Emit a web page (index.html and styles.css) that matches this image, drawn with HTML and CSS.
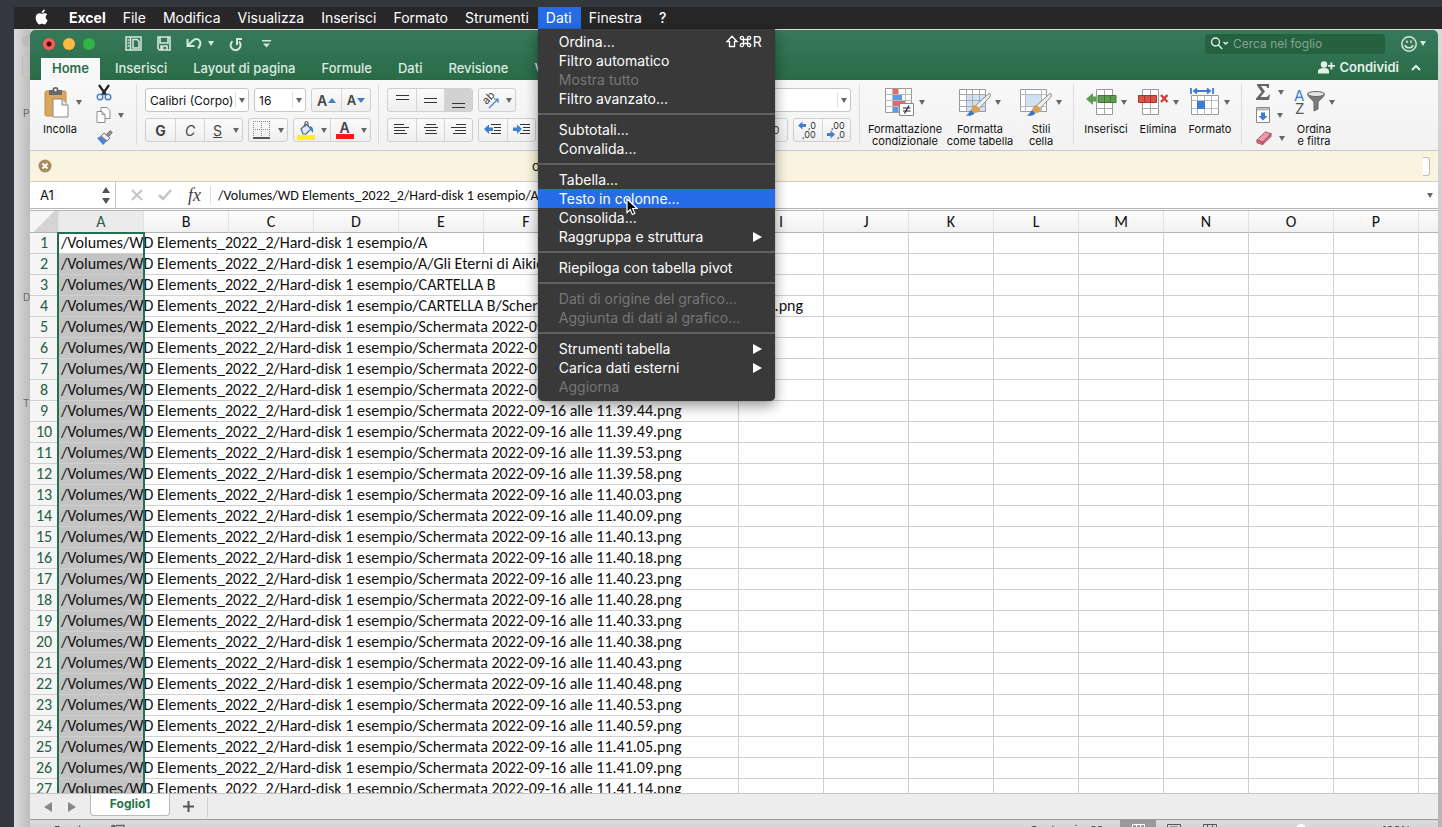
FILE: index.html
```html
<!DOCTYPE html>
<html lang="it">
<head>
    <meta charset="UTF-8">
    <meta name="viewport" content="width=device-width, initial-scale=1.0">
    <title>Excel - Foglio1</title>
    <link rel="stylesheet" href="styles.css">
</head>
<body>

    <!-- Barra dei menu -->
    <nav class="menubar">
        <svg class="apple" width="14" height="17" viewBox="0 0 14 17" fill="#fff"><path d="M9.8 0.5c.1 1-.3 1.9-.9 2.600-.6.7-1.400 1.100-2.200 1-.1-.9.3-1.800.9-2.400C8.200 1 9.100.5 9.800.5zM12.300 5.500c-1 .6-1.600 1.500-1.600 2.700 0 1.400.8 2.400 2 2.900-.3.900-.7 1.700-1.200 2.400-.6.9-1.300 1.900-2.300 1.900-.9 0-1.200-.6-2.300-.6s-1.400.6-2.300.6c-1 0-1.800-1-2.400-1.900C.5 11.200.1 8 1.400 6.100c.7-1.100 1.800-1.800 3-1.800 1 0 1.800.6 2.500.6s1.700-.7 2.900-.7c1 0 1.900.5 2.500 1.300z"/></svg>
        <button class="menu-title app-name">Excel</button>
        <button class="menu-title">File</button>
        <button class="menu-title">Modifica</button>
        <button class="menu-title">Visualizza</button>
        <button class="menu-title">Inserisci</button>
        <button class="menu-title">Formato</button>
        <button class="menu-title">Strumenti</button>
        <div class="menu-open">
            <button class="menu-title active">Dati</button>
            <div class="dropdown">
                <button>Ordina... <span class="shortcut"><svg width="12" height="13" viewBox="0 0 12 13" fill="none" stroke="#fff" stroke-width="1.300"><path d="M6 1.200L11 6.500H8.500V11.500H3.500V6.500H1z"/></svg><svg width="13" height="13" viewBox="0 0 13 13" fill="none" stroke="#fff" stroke-width="1.300"><path d="M4.500 4.500h4v4h-4zM4.500 4.500H3A1.600 1.600 0 1 1 4.500 3zM8.500 4.500V3A1.600 1.600 0 1 1 10 4.500zM8.500 8.500H10A1.600 1.600 0 1 1 8.500 10zM4.500 8.500V10A1.600 1.600 0 1 1 3 8.500z"/></svg>R</span></button>
                <button>Filtro automatico</button>
                <button disabled>Mostra tutto</button>
                <button>Filtro avanzato...</button>
                <hr>
                <button>Subtotali...</button>
                <button>Convalida...</button>
                <hr>
                <button>Tabella...</button>
                <button class="highlight">Testo in colonne...
                    <svg class="cursor" width="13" height="18" viewBox="0 0 13 18"><path d="M1 1v13.500l3.200-3 2.200 5 2.400-1-2.200-5H11z" fill="#000" stroke="#fff" stroke-width="1.200"/></svg>
                </button>
                <button>Consolida...</button>
                <button class="submenu">Raggruppa e struttura</button>
                <hr>
                <button>Riepiloga con tabella pivot</button>
                <hr>
                <button disabled>Dati di origine del grafico...</button>
                <button disabled>Aggiunta di dati al grafico...</button>
                <hr>
                <button class="submenu">Strumenti tabella</button>
                <button class="submenu">Carica dati esterni</button>
                <button disabled>Aggiorna</button>
            </div>
        </div>
        <button class="menu-title">Finestra</button>
        <button class="menu-title help">?</button>
    </nav>

    <div class="desktop">
        <!-- Finestra in secondo piano -->
        <aside class="back-window">
            <i class="back-dot"></i>
            <i class="back-button"></i>
            <span>P</span>
            <span>D</span>
            <span>T</span>
        </aside>

        <main class="window">
            <header class="titlebar">
                <div class="quick">
                    <span class="light red"></span>
                    <span class="light yellow"></span>
                    <span class="light green"></span>
                    <button class="quick-first" aria-label="Modelli"><svg width="17" height="15" viewBox="0 0 17 15" fill="none" stroke="#d5e8dc" stroke-width="1.500"><path d="M1 1h15v13H1zM5.500 1v13M8 3.500h4l2 2V12H8z"/><path d="M2.500 4h2M2.500 7h2M2.500 10h2"/></svg></button>
                    <button aria-label="Salva"><svg width="14" height="15" viewBox="0 0 14 15" fill="none" stroke="#d5e8dc" stroke-width="1.600"><path d="M1 1h12v13H2.500L1 12.500zM3 1.500v5.500h8V1.500"/><path d="M4 14v-4h6v4" /><path d="M5.500 11v3" stroke-width="2"/></svg></button>
                    <button class="has-caret light-caret" aria-label="Annulla"><svg width="16" height="13" viewBox="0 0 16 13" fill="none" stroke="#d5e8dc" stroke-width="2"><path d="M1.500 2v7h7M2 8.500L7 3.500c2-2 5-2 6.500 0s1 5-1.500 8"/></svg></button>
                    <button aria-label="Ripeti"><svg width="13" height="14" viewBox="0 0 13 14" fill="none" stroke="#d5e8dc" stroke-width="2"><path d="M3.500 4.200A5 5 0 1 0 10 4.500M8 8V2h5"/></svg></button>
                    <button class="quick-last" aria-label="Personalizza"><svg width="9" height="8" viewBox="0 0 9 8" fill="#d5e8dc"><path d="M0 0h9v1.500H0zM1 3.500h7L4.500 7.500z"/></svg></button>
                    <label class="search">
                        <svg width="19" height="13" viewBox="0 0 19 13" fill="none" stroke="#e4f1e9" stroke-width="1.400"><circle cx="5.500" cy="5" r="4"/><path d="M8.300 8l4 4M13.500 5l2.200 2 2.200-2"/></svg>
                        <input type="text" placeholder="Cerca nel foglio" aria-label="Cerca nel foglio">
                    </label>
                    <button class="smile has-caret light-caret" aria-label="Commenti"><svg width="16" height="16" viewBox="0 0 16 16" fill="none" stroke="#d5e8dc" stroke-width="1.500"><circle cx="8" cy="8" r="7.200"/><path d="M4 9c.8 3.800 7.200 3.800 8 0M6 4.500v2.500M10 4.500v2.500"/></svg></button>
                </div>
                <div class="tabs">
                    <button class="tab selected">Home</button>
                    <button class="tab">Inserisci</button>
                    <button class="tab">Layout di pagina</button>
                    <button class="tab">Formule</button>
                    <button class="tab">Dati</button>
                    <button class="tab">Revisione</button>
                    <button class="tab">Visualizza</button>
                    <button class="share"><svg width="17" height="13" viewBox="0 0 17 13" fill="#e4f1e9"><circle cx="6" cy="3.500" r="3.200"/><path d="M0 12.500V10c0-2 3-3 6-3s5 1 5 3v2.500zM10 4h2.500V1.500h1.800V4H17v1.800h-2.700V8.500h-1.800V5.800H10z"/></svg>Condividi</button>
                    <button class="collapse" aria-label="Riduci"><svg width="10" height="7" viewBox="0 0 10 7" fill="none" stroke="#e4f1e9" stroke-width="2"><path d="M1 6l4-4 4 4"/></svg></button>
                </div>
            </header>

            <!-- Barra multifunzione -->
            <section class="ribbon">
                <div class="group clipboard">
                    <button class="big has-caret">
                        <svg width="25" height="31" viewBox="0 0 25 31"><rect x="1" y="4" width="21" height="25" rx="1.500" fill="#dba65b" stroke="#c18e48"/><path d="M5 3h3.500a3 3 0 0 1 6 0H18v5H5z" fill="#686868"/><circle cx="11.500" cy="3" r="1.200" fill="#fff"/><path d="M9 12h9l6 6v12H9z" fill="#fff" stroke="#888"/><path d="M18 12v6h6" fill="#e8e8e8" stroke="#888"/></svg>
                        <span>Incolla</span>
                    </button>
                    <div class="stack">
                        <button aria-label="Taglia"><svg width="16" height="17" viewBox="0 0 16 17" fill="none"><path d="M3 1l7 10M13 1L6 11" stroke="#222" stroke-width="2.200"/><circle cx="4" cy="13" r="2.800" stroke="#4a7fc4" stroke-width="1.400"/><circle cx="12" cy="13" r="2.800" stroke="#4a7fc4" stroke-width="1.400"/></svg></button>
                        <button class="has-caret" aria-label="Copia"><svg width="15" height="16" viewBox="0 0 15 16" fill="#fff" stroke="#8c8c8c"><path d="M5 .5h6l3 3v8H5z"/><path d="M1 4.500h5l3 3v8H1z"/><path d="M6 4.500v3h3" fill="none"/></svg></button>
                        <button aria-label="Copia formato"><svg width="17" height="15" viewBox="0 0 17 15"><path d="M1 8l4-2 6 5-4 4z" fill="#4a85d0"/><path d="M5 6l3-3 6 5-3 3z" fill="#eee" stroke="#777"/><path d="M10.500 4.500L14 .8l2.200 1.700-3.500 4z" fill="#999" stroke="#666"/></svg></button>
                    </div>
                </div>

                <div class="group font-group">
                    <div class="row">
                        <label class="combo font-name"><input type="text" value="Calibri (Corpo)" aria-label="Carattere"></label>
                        <label class="combo font-size"><input type="text" value="16" aria-label="Dimensione"></label>
                        <div class="buttons">
                            <button class="w29 grow">A<svg width="8" height="5" viewBox="0 0 8 5"><path d="M0 5l4-5 4 5z" fill="#3f7fcb"/></svg></button>
                            <button class="w29 shrink">A<svg width="8" height="5" viewBox="0 0 8 5"><path d="M0 0l4 5 4-5z" fill="#3f7fcb"/></svg></button>
                        </div>
                    </div>
                    <div class="row">
                        <div class="buttons">
                            <button class="w29"><b>G</b></button>
                            <button class="w29"><em>C</em></button>
                            <button class="w26"><u>S</u></button>
                            <button class="w12 only-caret" aria-label="Altre sottolineature"></button>
                        </div>
                        <div class="buttons">
                            <button class="w26" aria-label="Bordi"><svg width="18" height="18" viewBox="0 0 18 18" fill="none" stroke="#888" stroke-dasharray="1 1"><path d="M.5 0v16M8.500 0v16M16.500 0v16M0 .5h17M0 8.500h17"/><path d="M0 17h17" stroke="#222" stroke-width="1.500" stroke-dasharray="none"/></svg></button>
                            <button class="w12 only-caret" aria-label="Altri bordi"></button>
                        </div>
                        <div class="buttons">
                            <button class="w24" aria-label="Riempimento"><svg width="18" height="19" viewBox="0 0 18 19"><path d="M4 8l5-5 5 5-5 5-3 0z" fill="#dce9f7" stroke="#44689a" stroke-width="1.200"/><path d="M8 6V2a1.500 1.500 0 0 1 3 0v3" fill="none" stroke="#444"/><path d="M13 5c3 1 4 4 2.500 7-1-1-1-3-2.500-4z" fill="#3f7fcb"/><rect y="14" width="18" height="5" fill="#fbee25"/></svg></button>
                            <button class="w12 only-caret" aria-label="Altri riempimenti"></button>
                            <button class="w28 font-color">A<i></i></button>
                            <button class="w12 only-caret" aria-label="Altri colori"></button>
                        </div>
                    </div>
                </div>

                <div class="group align-group">
                    <div class="row">
                        <div class="buttons">
                            <button class="w28" aria-label="In alto"><svg width="13" height="17" viewBox="0 0 13 17" stroke="#333"><path d="M0 3.500h13M0 7.500h13"/></svg></button>
                            <button class="w28" aria-label="Al centro"><svg width="13" height="17" viewBox="0 0 13 17" stroke="#333"><path d="M0 6.500h13M0 10.500h13"/></svg></button>
                            <button class="w28 pressed" aria-label="In basso"><svg width="13" height="17" viewBox="0 0 13 17" stroke="#333"><path d="M0 11.500h13M0 15.500h13"/></svg></button>
                        </div>
                        <div class="buttons">
                            <button class="w36 has-caret" aria-label="Orientamento"><svg width="18" height="18" viewBox="0 0 18 18"><text class="orient" x="1" y="10" transform="rotate(-45 7 9)">ab</text><path d="M6 17l9-9M11 8h4v4" fill="none" stroke="#3f7fcb" stroke-width="1.200"/></svg></button>
                        </div>
                    </div>
                    <div class="row">
                        <div class="buttons">
                            <button class="w28" aria-label="Sinistra"><svg width="16" height="12" viewBox="0 0 16 12" stroke="#333"><path d="M0 .5h10M0 3.500h15M0 6.500h11M0 9.500h13"/></svg></button>
                            <button class="w28" aria-label="Centra"><svg width="16" height="12" viewBox="0 0 16 12" stroke="#333"><path d="M3 .5h10M1 3.500h14M3 6.500h10M2 9.500h12"/></svg></button>
                            <button class="w28" aria-label="Destra"><svg width="16" height="12" viewBox="0 0 16 12" stroke="#333"><path d="M5 .5h10M0 3.500h15M4 6.500h11M2 9.500h13"/></svg></button>
                        </div>
                        <div class="buttons">
                            <button class="w28" aria-label="Riduci rientro"><svg width="18" height="12" viewBox="0 0 18 12"><path d="M0 5l5-4.500v3h4v3.500H5v3z" fill="#3f7fcb"/><path d="M7 .5h10M10 3.500h7M10 6.500h7M7 9.500h10" stroke="#333"/></svg></button>
                            <button class="w28" aria-label="Aumenta rientro"><svg width="18" height="12" viewBox="0 0 18 12"><path d="M9 5L4 .5v3H0v3.500h4v3z" fill="#3f7fcb"/><path d="M7 .5h10M10 3.500h7M10 6.500h7M7 9.500h10" stroke="#333"/></svg></button>
                        </div>
                    </div>
                </div>

                <div class="group number-group">
                    <label class="combo"><input type="text" value="" aria-label="Formato numero"></label>
                    <div class="row right">
                        <div class="buttons"><button class="w36 thousands">000</button></div>
                        <div class="buttons">
                            <button class="w28" aria-label="Aumenta decimali"><svg class="decimals" width="20" height="18" viewBox="0 0 20 18"><path d="M0 4.500L4.500 .5v2.500H8v3H4.500v2.500z" fill="#3f7fcb"/><text x="10" y="8">,0</text><text x="4" y="17">,00</text></svg></button>
                            <button class="w28" aria-label="Riduci decimali"><svg class="decimals" width="20" height="18" viewBox="0 0 20 18"><text x="4" y="8">,00</text><path d="M8 13.500L3.500 9.500v2.500H0v3h3.500v2.500z" fill="#3f7fcb"/><text x="10" y="17">,0</text></svg></button>
                        </div>
                    </div>
                </div>

                <div class="group style-group">
                    <button class="big has-caret w80">
                        <svg width="30" height="28" viewBox="0 0 30 28"><path d="M.5.5h26v24H.5z" fill="#fff" stroke="#999"/><path d="M.5 6.500h26M.5 12.500h26M.5 18.500h26M7.500.5v24M13.500.5v24M20.500.5v24" stroke="#bbb"/><path d="M8 1h5v5H8zM8 13h12v5H8z" fill="#e36c68"/><path d="M8 7h9v5H8zM8 19h5v5H8z" fill="#5a9ae6"/><path d="M14.500 15.500h14v12h-14z" fill="#fff" stroke="#888"/><path d="M18 20h7.500M18 23h7.500M24 17.500l-4.500 8" stroke="#222" stroke-width="1.200"/></svg>
                        <span>Formattazione<br>condizionale</span>
                    </button>
                    <button class="big has-caret w66">
                        <svg width="32" height="28" viewBox="0 0 32 28"><path d="M.5 1.500h26v22H.5z" fill="#fff" stroke="#999"/><path d="M7 7h19v16H7z" fill="#cfe1f5"/><path d="M.5 6.500h26M.5 12.500h26M.5 18.500h26M7.500 1.500v22M13.500 1.500v22M20.500 1.500v22" stroke="#aaa"/><path d="M30 5.500c2 0 1.500 2 .5 4L20 20.500l-3.500-3z" fill="#eee" stroke="#888"/><path d="M16 17l5 4c0 3-3 4-6 4l-3-3c1-3 2-5 4-5z" fill="#dba050"/><path d="M12 22l3.500 3.500C13 28 10 28 7 27.500c2-1 3-3 5-5.500z" fill="#3474cc"/></svg>
                        <span>Formatta<br>come tabella</span>
                    </button>
                    <button class="big has-caret w52">
                        <svg width="32" height="28" viewBox="0 0 32 28"><path d="M.5 1.500h26v22H.5z" fill="#fff" stroke="#999"/><path d="M5 7h17v12H5z" fill="#cfe1f5"/><path d="M.5 6.500h26M.5 18.500h26M5.500 1.500v22M21.500 1.500v22" stroke="#bbb"/><path d="M30 5.500c2 0 1.500 2 .5 4L20 20.500l-3.500-3z" fill="#eee" stroke="#888"/><path d="M16 17l5 4c0 3-3 4-6 4l-3-3c1-3 2-5 4-5z" fill="#dba050"/><path d="M12 22l3.500 3.500C13 28 10 28 7 27.500c2-1 3-3 5-5.500z" fill="#3474cc"/></svg>
                        <span>Stili<br>cella</span>
                    </button>
                </div>

                <div class="group cell-group">
                    <button class="big has-caret w52">
                        <svg width="31" height="28" viewBox="0 0 31 28"><path d="M10.500 1.500h16v25h-16z" fill="#fff" stroke="#999"/><path d="M18.500 1.500v25M10.500 20.500h16" stroke="#aaa"/><path d="M12 7.500h18v7H12z" fill="#5e9c50" stroke="#40783a"/><path d="M18.500 8v6M24.500 8v6" stroke="#40783a"/><path d="M0 11l7-6v3.500h3v5H7V17z" fill="#5e9c50"/></svg>
                        <span>Inserisci</span>
                    </button>
                    <button class="big has-caret w52">
                        <svg width="31" height="28" viewBox="0 0 31 28"><path d="M4.500 1.500h16v25h-16z" fill="#fff" stroke="#999"/><path d="M12.500 1.500v25M4.500 20.500h16" stroke="#aaa"/><path d="M.5 7.500h18v7H.5z" fill="#d9534a" stroke="#a93730"/><path d="M6.500 8v6M12.500 8v6" stroke="#a93730"/><path d="M23 7l6.500 7M29.500 7L23 14" stroke="#cc4037" stroke-width="2.400"/></svg>
                        <span>Elimina</span>
                    </button>
                    <button class="big has-caret w52">
                        <svg width="30" height="28" viewBox="0 0 30 28"><path d="M1.500 7.500h27v19h-27z" fill="#fff" stroke="#999"/><path d="M1.500 12.500h27M1.500 20.500h27M7.500 7.500v19M14.500 7.500v19M21.500 7.500v19" stroke="#bbb"/><path d="M7 13h8v8H7z" fill="#3d7cd4"/><path d="M1 0v6M23 0v6M4 3h16M7 .5L4 3l3 2.500M17 .5L20 3l-3 2.500" fill="none" stroke="#3d7cd4" stroke-width="1.800"/></svg>
                        <span>Formato</span>
                    </button>
                </div>

                <div class="group edit-group">
                    <div class="stack">
                        <button class="has-caret" aria-label="Somma"><svg width="15" height="16" viewBox="0 0 15 16"><path d="M1 0h12v4h-1.500C11 2.500 10 2 8.500 2H5l4 5.500L4.500 13H10c1.500 0 2.500-1 3-2.500h1L13 16H0v-1.500L5.500 8 1 1.500z" fill="#666"/></svg></button>
                        <button class="has-caret" aria-label="Riempi"><svg width="14" height="16" viewBox="0 0 14 16"><path d="M.5.500h13v15H.5z" fill="#fff" stroke="#888"/><path d="M1 1h12v2.500H1z" fill="#bbb"/><path d="M5 5.500h4v3.500h2.500L7 13.500 2.500 9H5z" fill="#3d7cd4"/></svg></button>
                        <button class="has-caret" aria-label="Cancella"><svg width="16" height="16" viewBox="0 0 17 16"><path d="M1 10l9-8.500 6 2-9 9z" fill="#f09aac" stroke="#a04c60"/><path d="M1 10l6 2.500V15l-6-2zM7 12.500l9-9v3L7 15z" fill="#d8708a" stroke="#a04c60"/></svg></button>
                    </div>
                    <button class="big has-caret w52">
                        <svg width="31" height="28" viewBox="0 0 31 28"><text class="sort-a" x="0" y="13">A</text><text class="sort-z" x="1" y="26">Z</text><path d="M13.500 6c0 2 5 6 6.500 8v9l4-2v-7c2-2 6.500-6 6.500-8z" fill="#7b7b7b" stroke="#666"/><ellipse cx="22" cy="6" rx="8.500" ry="2.500" fill="#e4e4e4" stroke="#666"/></svg>
                        <span>Ordina<br>e filtra</span>
                    </button>
                </div>
            </section>

            <div class="message">
                <svg width="10" height="14" viewBox="0 0 10 14"><circle cx="7" cy="7" r="6.500" fill="#a78c62"/><path d="M4.500 4.500l5 5M9.500 4.500l-5 5" stroke="#fff" stroke-width="1.800"/></svg>
                <span>o</span>
                <button aria-label="Chiudi"></button>
            </div>

            <div class="formula">
                <input class="name-box" type="text" value="A1" aria-label="Casella nome">
                <div class="spinner"><svg width="8" height="17" viewBox="0 0 8 17" fill="#555"><path d="M0 6l4-6 4 6zM0 11h8l-4 6z"/></svg></div>
                <button aria-label="Annulla"><svg width="12" height="12" viewBox="0 0 12 12" stroke="#c4c4c4" stroke-width="2"><path d="M1 1l10 10M11 1L1 11"/></svg></button>
                <button aria-label="Invio"><svg width="14" height="12" viewBox="0 0 14 12" fill="none" stroke="#c4c4c4" stroke-width="2.500"><path d="M1 6l4 4 8-9"/></svg></button>
                <button class="fx"><i>fx</i></button>
                <input class="formula-text" type="text" value="/Volumes/WD Elements_2022_2/Hard-disk 1 esempio/A" aria-label="Formula">
                <span class="caret"></span>
            </div>

            <!-- Foglio di calcolo -->
            <div class="sheet">
                <table>
                    <thead>
                        <tr id="columns"><th class="corner"></th></tr>
                    </thead>
                    <tbody id="rows"></tbody>
                </table>
                <div class="selection"></div>
            </div>

            <div class="sheet-tabs">
                <button class="prev" aria-label="Precedente"></button>
                <button class="next" aria-label="Successivo"></button>
                <button class="sheet-tab">Foglio1</button>
                <button class="add" aria-label="Nuovo foglio"><svg width="11" height="11" viewBox="0 0 11 11" stroke="#555" stroke-width="2"><path d="M5.500 0v11M0 5.500h11"/></svg></button>
            </div>

            <footer class="status">
                <span class="ready">Pronto</span>
                <svg width="16" height="14" viewBox="0 0 16 14" fill="none" stroke="#666" stroke-width="1.500"><circle cx="3.500" cy="3.500" r="2" fill="#666"/><path d="M6 1.500h8v10H2V7"/></svg>
                <span class="count">Conteggio: 89</span>
                <button class="view on" aria-label="Normale"><svg width="13" height="12" viewBox="0 0 13 12" fill="none" stroke="#fff"><path d="M.5.500h12v11H.5zM4.500.5v11M8.500.5v11M.5 4.500h12"/></svg></button>
                <button class="view" aria-label="Layout"><svg width="14" height="12" viewBox="0 0 14 12" fill="none" stroke="#555"><path d="M.5.500h13v11H.5zM3.500 3h7v8M3.500 3v8M4 5h6"/></svg></button>
                <button class="view" aria-label="Interruzioni"><svg width="14" height="12" viewBox="0 0 14 12" fill="none" stroke="#555"><path d="M.5.500h13v11H.5zM4.500.5v11M9.500.5v11M.5 4.500h13"/></svg></button>
                <span class="zoom"><i></i></span>
                <span class="percent">100%</span>
            </footer>
        </main>
    </div>

    <script>
        const base = "/Volumes/WD Elements_2022_2/Hard-disk 1 esempio/";
        const shot = "Schermata 2022-09-16 alle ";

        // Orari delle schermate, una per riga dalla 5 in poi
        const times = ["11.39.24", "11.39.29", "11.39.34", "11.39.39", "11.39.44", "11.39.49",
            "11.39.53", "11.39.58", "11.40.03", "11.40.09", "11.40.13", "11.40.18", "11.40.23",
            "11.40.28", "11.40.33", "11.40.38", "11.40.43", "11.40.48", "11.40.53", "11.40.59",
            "11.41.05", "11.41.09", "11.41.14"];

        // span = colonne coperte dal testo che esce dalla colonna A
        const rows = [
            { text: base + "A", span: 4 },
            { text: base + "A/Gli Eterni di Aikido.png", span: 7 },
            { text: base + "CARTELLA B", span: 7 },
            { text: base + "CARTELLA B/Schermata 2022-09-16 alle 11.39.19 copia.png", span: 8 }
        ];
        times.forEach(time => rows.push({ text: base + shot + time + ".png", span: 7 }));

        // Intestazioni delle colonne
        const columns = document.getElementById("columns");
        "ABCDEFGHIJKLMNOP".split("").forEach(letter => {
            columns.innerHTML += `<th class="col">${letter}</th>`;
        });
        columns.innerHTML += "<th></th>";

        // Righe del foglio
        const body = document.getElementById("rows");
        rows.forEach((row, index) => {
            // nella prima riga il testo si ferma alla colonna E
            let cells = `<th>${index + 1}</th><td class="path">${row.text}</td><td colspan="${row.span}"></td>`;
            for (let i = row.span; i < 16; i++) {
                cells += "<td></td>";
            }
            body.innerHTML += `<tr>${cells}</tr>`;
        });
    </script>

</body>
</html>
```
FILE: styles.css
```css
/* Base */
* {
    box-sizing: border-box;
}

body {
    margin: 0;
    padding: 7px 0 0 14px;
    height: 100vh;
    display: flex;
    flex-direction: column;
    overflow: hidden;
    background-color: #34373c;
    font-family: Inter, "Liberation Sans", sans-serif;
    font-size: 13px;
    color: #111;
}

button, input {
    font: inherit;
    color: inherit;
    background: none;
    border: none;
    padding: 0;
    margin: 0;
}

button {
    cursor: pointer;
}

svg {
    display: block;
    flex-shrink: 0;
    overflow: visible;
}

/* Barra dei menu */
.menubar {
    display: flex;
    flex: none;
    height: 22px;
    padding-left: 21px;
    background-color: #272727;
    color: #fff;
    font-size: 14px;
    position: relative;
    z-index: 10;
}

.apple {
    margin: 2px 12px 0 0;
}

.menu-title {
    height: 22px;
    padding: 0 9px 0 8px;
    line-height: 22px;
}

.app-name {
    font-weight: 700;
}

.menu-open {
    position: relative;
}

.menu-title.active {
    background-color: #266ce6;
}

.help {
    font-weight: 500;
}

.dropdown {
    position: absolute;
    top: 100%;
    left: 0;
    width: 237px;
    padding: 3px 0 5px;
    background-color: #393939;
    border-radius: 0 0 5px 5px;
    box-shadow: 0 5px 14px rgba(0,0,0,0.4), 0 0 1px rgba(0,0,0,0.6);
}

.dropdown button {
    display: flex;
    align-items: center;
    width: 100%;
    height: 19px;
    padding: 0 13px 0 21px;
    line-height: 18px;
    white-space: nowrap;
    position: relative;
}

.dropdown button:disabled {
    color: #777;
}

.dropdown .highlight {
    background-color: #266ce6;
}

.dropdown hr {
    height: 2px;
    margin: 5px 0;
    border: none;
    background-color: #606060;
}

.shortcut {
    display: flex;
    align-items: center;
    gap: 1px;
    margin-left: auto;
}

.submenu::after {
    content: "";
    margin-left: auto;
    border-left: 9px solid #fff;
    border-top: 5px solid transparent;
    border-bottom: 5px solid transparent;
}

.cursor {
    position: absolute;
    left: 88px;
    top: 9px;
    z-index: 2;
}

/* Finestra in secondo piano */
.desktop {
    flex: 1;
    display: flex;
    min-height: 0;
    padding: 1px 4px 0 0;
    background: linear-gradient(#d8d8d8, #b5b5b5);
}

.back-window {
    flex: none;
    width: 16px;
    overflow: hidden;
    display: flex;
    flex-direction: column;
    background: linear-gradient(90deg, #dadada, #bdbdbd);
    color: #666;
    font-size: 10px;
}

.back-window span {
    height: 14px;
    padding-left: 9px;
    margin-bottom: 170px;
}

.back-window span + span + span {
    margin-top: -78px;
}

.back-dot {
    flex: none;
    width: 12px;
    height: 12px;
    margin: 5px 0 7px 8px;
    border-radius: 6px;
    background-color: #bbb;
}

.back-button {
    flex: none;
    width: 30px;
    height: 24px;
    margin: 0 0 29px 8px;
    border: 1px solid #bbb;
    border-radius: 4px;
}

/* Finestra principale */
.window {
    flex: 1;
    min-width: 0;
    display: flex;
    flex-direction: column;
    background-color: #fff;
    border-radius: 5px 5px 0 0;
    overflow: hidden;
}

.titlebar {
    flex: none;
    height: 50px;
    background: linear-gradient(#36795a, #2a6b47);
    color: #dcebe2;
}

.quick {
    display: flex;
    align-items: center;
    height: 27px;
    padding: 0 12px 0 13px;
}

.light {
    width: 12px;
    height: 12px;
    margin-right: 8px;
    border-radius: 6px;
}

.red {
    background: radial-gradient(#4d0000 2px, #fc5b57 3px);
}

.yellow {
    background-color: #fdbc40;
}

.green {
    background-color: #2fb545;
}

.quick button {
    margin-right: 15px;
}

.quick .quick-first {
    margin-left: 22px;
}

.quick .quick-last {
    margin-left: 5px;
}

.search {
    display: flex;
    align-items: center;
    gap: 4px;
    width: 180px;
    height: 20px;
    margin: 0 16px 0 auto;
    padding-left: 5px;
    border-radius: 3px;
    background-color: #25603f;
}

.search input {
    width: 140px;
    outline: none;
    font-size: 12px;
}

.search input::placeholder {
    color: #83a892;
    opacity: 1;
}

.quick .smile {
    margin-right: 0;
}

.smile.light-caret::after {
    margin-left: 3px;
}

.tabs {
    display: flex;
    height: 23px;
    padding: 1px 17px 0 11px;
    font-weight: 600;
    line-height: 20px;
}

.tab {
    margin-right: 26px;
    padding-bottom: 2px;
    font-weight: 500;
    white-space: nowrap;
}

.tab.selected {
    width: 59px;
    margin-right: 15px;
    background-color: #f7f7f7;
    color: #2b6e4a;
    font-weight: 600;
}

.share {
    display: flex;
    align-items: center;
    gap: 4px;
    height: 18px;
    margin-left: auto;
    color: #e4f1e9;
}

.collapse {
    height: 18px;
    margin-left: 12px;
}

/* Triangolini dei menu a discesa */
.has-caret {
    display: flex;
    align-items: center;
}

.has-caret::after, .only-caret::after, .combo::after, .caret {
    content: "";
    flex: none;
    border-top: 5px solid #666;
    border-left: 3px solid transparent;
    border-right: 3px solid transparent;
}

.light-caret::after {
    border-top-color: #d5e8dc;
    margin-left: 6px;
}

/* Barra multifunzione */
.ribbon {
    display: flex;
    flex: none;
    height: 71px;
    padding-top: 4px;
    background: linear-gradient(#f8f8f8, #f2f2f2);
    border-bottom: 1px solid #c9c9c9;
}

.group {
    flex: none;
    height: 61px;
    border-right: 1px solid #dcdcdc;
}

.clipboard {
    display: flex;
    width: 107px;
    padding-left: 12px;
}

.big {
    display: flex;
    flex-wrap: wrap;
    justify-content: center;
    align-content: flex-start;
    gap: 7px 4px;
    padding-top: 4px;
    font-size: 11px;
    line-height: 12px;
}

.big span {
    order: 1;
    flex: 0 0 100%;
    text-align: center;
    white-space: nowrap;
}

.clipboard .big {
    width: 42px;
    gap: 5px 7px;
    padding-top: 3px;
}

.clipboard .big span {
    padding-right: 6px;
}

.stack {
    display: flex;
    flex-direction: column;
    gap: 7px;
    margin-left: 12px;
}

.stack button {
    height: 16px;
}

.stack .has-caret::after {
    margin-left: 7px;
}

.font-group {
    width: 242px;
    padding-left: 8px;
}

.row {
    display: flex;
    gap: 5px;
    margin-bottom: 6px;
}

.font-group, .align-group, .number-group {
    padding-top: 4px;
}

.combo {
    display: flex;
    align-items: center;
    height: 24px;
    padding: 0 3px 0 4px;
    border: 1px solid #c6c6c6;
    border-radius: 3px;
    background-color: #fff;
}

.combo input {
    flex: 1;
    min-width: 0;
    height: 16px;
    margin-right: 3px;
    border-right: 1px solid #e0e0e0;
}

.font-name, .font-size {
    font-size: 12px;
}

.font-name {
    width: 104px;
}

.font-size {
    width: 52px;
}

.buttons {
    display: flex;
    height: 24px;
    border: 1px solid #cfcfcf;
    border-radius: 3px;
    background: linear-gradient(#fafafa, #efefef);
    overflow: hidden;
}

.buttons button {
    display: flex;
    align-items: center;
    justify-content: center;
    border-left: 1px solid #d5d5d5;
    color: #444;
    font-size: 14px;
}

.buttons button:first-child {
    border-left: none;
}

.buttons .pressed {
    background-color: #d2d2d2;
}

.buttons .has-caret::after {
    margin-left: 5px;
}

.buttons .only-caret {
    border-left: none;
}

.grow, .shrink {
    gap: 1px;
    font-weight: 600;
}

.buttons .shrink {
    font-size: 13px;
}

.font-color {
    flex-direction: column;
    font-weight: 600;
    line-height: 13px;
}

.font-color i {
    width: 18px;
    height: 5px;
    background-color: #f41b11;
}

.w12 { width: 12px; }
.w24 { width: 24px; }
.w26 { width: 26px; }
.w28 { width: 28px; }
.w29 { width: 29px; }
.w36 { width: 36px; }
.w52 { width: 52px; }
.w66 { width: 66px; }
.w80 { width: 80px; }

.align-group {
    width: 230px;
    padding-left: 8px;
}

.orient {
    font-size: 11px;
    fill: #444;
}

.number-group {
    width: 251px;
    padding: 4px 8px 0 30px;
}

.number-group .combo {
    margin-bottom: 6px;
}

.right {
    justify-content: flex-end;
}

.buttons .thousands {
    font-size: 11px;
}

.decimals {
    font-size: 9px;
    fill: #333;
}

.style-group {
    display: flex;
    width: 214px;
    gap: 2px;
    padding-left: 5px;
}

.cell-group {
    display: flex;
    width: 168px;
    padding-left: 6px;
}

.edit-group {
    display: flex;
    border-right: none;
}

.edit-group .stack {
    width: 32px;
    margin-left: 14px;
}

.sort-a {
    font-size: 15px;
    fill: #3d7cd4;
}

.sort-z {
    font-size: 15px;
    fill: #555;
}

/* Avviso giallo */
.message {
    display: flex;
    align-items: center;
    flex: none;
    height: 31px;
    padding: 0 8px;
    background-color: #f8f4df;
    border-bottom: 1px solid #d3d0c2;
}

.message span {
    margin-left: 484px;
}

.message button {
    width: 7px;
    height: 19px;
    margin-left: auto;
    background-color: #fff;
    border: 1px solid #bbb;
    border-left: none;
    border-radius: 0 3px 3px 0;
}

/* Barra della formula */
.formula {
    display: flex;
    align-items: center;
    flex: none;
    height: 29px;
    padding: 0 5px 0 10px;
    border-bottom: 3px double #b5b5b5;
}

.name-box {
    width: 62px;
}

.spinner {
    display: flex;
    align-items: center;
    width: 14px;
    height: 26px;
    border-right: 1px solid #c6c6c6;
}

.formula button {
    margin-left: 15px;
}

.formula .fx {
    width: 24px;
    height: 18px;
    padding-right: 8px;
    border-right: 1px solid #ddd;
    font-family: "Liberation Serif", serif;
    font-size: 18px;
    line-height: 16px;
    color: #444;
}

.formula-text {
    flex: 1;
    margin-left: 7px;
    font-family: Calibri, Carlito, Lato, sans-serif;
    font-size: 14px;
}

/* Foglio di calcolo */
.sheet {
    flex: 1;
    min-height: 0;
    position: relative;
    overflow: hidden;
    font-family: Calibri, Carlito, Lato, sans-serif;
    font-size: 16px;
}

table {
    width: 1474px;
    table-layout: fixed;
    border-collapse: separate;
    border-spacing: 0;
}

th {
    padding: 0;
    height: 21px;
    line-height: 20px;
    font-weight: 500;
    background-color: #f5f5f5;
    border-right: 1px solid #d0d0d0;
    border-bottom: 1px solid #d0d0d0;
}

thead th {
    height: 22px;
    background: linear-gradient(#fdfdfd, #f1f1f1);
    border-right-color: #e2e2e2;
    border-bottom-color: #b5b5b5;
}

thead .col:nth-child(2) {
    background: #ebebeb;
}

.col:nth-child(2), tbody th {
    color: #235f42;
}

.corner {
    width: 29px;
}

thead .corner {
    background: linear-gradient(135deg, #f5f5f5 50%, #d4d4d4 50%);
}

td {
    height: 21px;
    padding: 0;
    line-height: 20px;
    border-right: 1px solid #cfcfcf;
    border-bottom: 1px solid #cfcfcf;
}

.path {
    padding-left: 2px;
    background-color: #c4c4c4;
    white-space: nowrap;
}

tr:first-child .path {
    background-color: #fff;
}

.selection {
    position: absolute;
    top: 21px;
    left: 27px;
    width: 88px;
    bottom: -2px;
    border: 2px solid #237050;
    pointer-events: none;
}

/* Schede dei fogli */
.sheet-tabs {
    display: flex;
    align-items: center;
    flex: none;
    height: 26px;
    padding-left: 14px;
    background-color: #ededed;
    border-top: 1px solid #c4c4c4;
}

.prev, .next {
    border-top: 5px solid transparent;
    border-bottom: 5px solid transparent;
}

.prev {
    border-right: 8px solid #888;
    margin-right: 16px;
}

.next {
    border-left: 8px solid #888;
    margin-right: 14px;
}

.sheet-tab {
    align-self: flex-start;
    width: 80px;
    height: 22px;
    padding-bottom: 2px;
    background-color: #fff;
    border: 1px solid #bbb;
    border-top: none;
    border-radius: 0 0 4px 4px;
    color: #23774d;
    font-size: 12px;
    font-weight: 700;
}

.add {
    display: flex;
    align-items: center;
    height: 20px;
    padding: 0 13px;
    border-right: 1px solid #ccc;
}

/* Barra di stato */
.status {
    display: flex;
    flex: none;
    height: 24px;
    margin-bottom: -16px;
    padding: 4px 22px 0 24px;
    background: linear-gradient(#dcdcdc, #c8c8c8);
    border-top: 1px solid #999;
    font-size: 11px;
    line-height: 13px;
    color: #444;
}

.ready {
    margin-right: 22px;
}

.count {
    width: 90px;
    margin-left: auto;
}

.view {
    display: flex;
    justify-content: center;
    width: 36px;
    height: 24px;
}

.view.on {
    margin-top: -4px;
    padding-top: 4px;
    background-color: #999;
}

.zoom {
    width: 130px;
    padding-left: 68px;
}

.zoom i {
    display: block;
    width: 10px;
    height: 10px;
    border-radius: 5px;
    background-color: #fff;
}

.percent {
    width: 34px;
    margin-left: 24px;
}
```
